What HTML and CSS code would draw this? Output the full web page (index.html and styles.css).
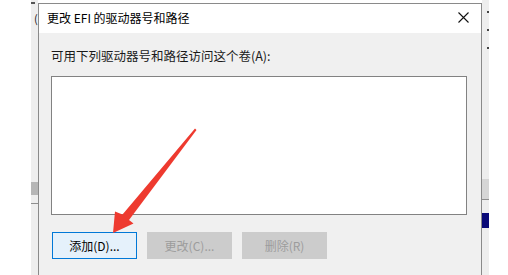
FILE: index.html
```html
<!DOCTYPE html>
<html lang="zh-CN">
<head>
    <meta charset="UTF-8">
    <meta name="viewport" content="width=device-width, initial-scale=1.0">
    <title>更改 EFI 的驱动器号和路径</title>
    <link rel="stylesheet" href="styles.css">
</head>
<body>
    <div class="desk">
        <div class="desk-gap"></div>

        <!-- window behind, left edge -->
        <div class="strip strip-left">
            <div class="mark"></div>
            <div class="paren">(</div>
            <div class="strip-fill" style="height: 158px"></div>
            <div class="strip-dark" style="height: 13px"></div>
            <div class="strip-fill" style="height: 8px"></div>
            <div class="strip-line"></div>
        </div>

        <div class="dialog">
            <div class="title-bar">
                <span class="title">更改 EFI 的驱动器号和路径</span>
                <svg class="close" width="11" height="11" viewBox="0 0 11 11">
                    <path d="M0.5 0.5 L10.5 10.5 M10.5 0.5 L0.5 10.5" stroke="#111" stroke-width="1.1" fill="none"/>
                </svg>
            </div>
            <div class="dialog-body">
                <div class="label">可用下列驱动器号和路径访问这个卷(A):</div>
                <div class="listbox"></div>
                <div class="buttons">
                    <button class="btn btn-default">添加(D)...</button>
                    <button class="btn" disabled>更改(C)...</button>
                    <button class="btn" disabled>删除(R)</button>
                </div>
            </div>
        </div>

        <!-- window behind, right edge -->
        <div class="strip strip-right">
            <div class="dot" style="margin-top: 11px"></div>
            <div class="dot" style="margin-top: 16px"></div>
            <div class="dot" style="margin-top: 16px"></div>
            <div class="strip-fill" style="height: 130px"></div>
            <div class="strip-dark" style="height: 20px"></div>
            <div class="strip-line"></div>
            <div class="strip-fill" style="height: 13px"></div>
            <div class="strip-blue"></div>
        </div>
    </div>

    <svg class="arrow" width="508" height="275" viewBox="0 0 508 275">
        <polygon points="113,233 115,211.5 122.5,214.5 195,128.5 196.5,130 129,220 133.5,223.5" fill="#ee3a2f"/>
    </svg>
</body>
</html>
```

FILE: styles.css
```css
body {
    margin: 0;
    background: #fff;
    font-family: "Noto Sans CJK SC", sans-serif;
    overflow: hidden;
}

.desk {
    display: flex;
    align-items: flex-start;
    height: 275px;
}

.desk-gap {
    width: 31px;
    flex-shrink: 0;
}

.strip {
    width: 7px;
    height: 275px;
    flex-shrink: 0;
    background: #eeeeee;
    display: flex;
    flex-direction: column;
}

.strip-left .mark {
    width: 4px;
    height: 2px;
    margin-top: 2px;
    background: #555;
}

.strip-left .paren {
    font-size: 11px;
    line-height: 12px;
    margin-top: 8px;
    margin-left: 3px;
    color: #222;
}

.strip-fill {
    flex-shrink: 0;
}

.strip-dark {
    background: #b6b6b6;
    flex-shrink: 0;
}

.strip-line {
    height: 1px;
    background: #8e8e8e;
    flex-shrink: 0;
}

.strip-right .dot {
    width: 2px;
    height: 2px;
    margin-left: 5px;
    background: #444;
}

.strip-right .strip-dark {
    background: #d6d6d6;
}

.strip-blue {
    height: 15px;
    background: #0a0a78;
}

.dialog {
    width: 442px;
    height: 280px;
    margin-top: 3px;
    border: 1px solid #8a8a8a;
    background: #f0f0f0;
    display: flex;
    flex-direction: column;
    flex-shrink: 0;
}

.title-bar {
    height: 26px;
    padding: 0 12px 3px 8px;
    background: #fff;
    display: flex;
    align-items: center;
    justify-content: space-between;
}

.title {
    font-size: 12px;
    color: #000;
}

.dialog-body {
    padding: 15px 14px 0 12px;
}

.label {
    font-size: 12.5px;
    line-height: 16px;
    color: #1a1a1a;
}

.listbox {
    height: 137px;
    margin-top: 12px;
    background: #fff;
    border: 1px solid #828282;
}

.buttons {
    display: flex;
    gap: 10px;
    margin-top: 17px;
    padding-left: 1px;
}

.btn {
    width: 85px;
    height: 27px;
    padding: 0;
    font-family: "Noto Sans CJK SC", sans-serif;
    font-size: 12px;
    color: #000;
    background: #cccccc;
    border: 1px solid #cccccc;
}

.btn:disabled {
    color: #9c9c9c;
}

.btn-default {
    background: #e5f1fb;
    border-color: #0078d7;
}

.arrow {
    position: absolute;
    top: 0;
    left: 0;
    pointer-events: none;
}
```
